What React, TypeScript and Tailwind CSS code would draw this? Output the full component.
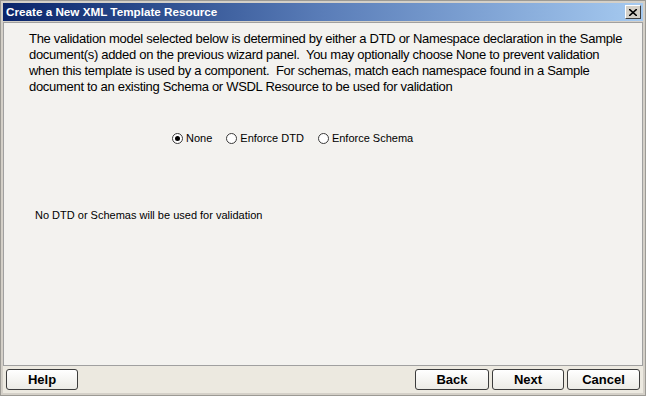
import React, { useState } from 'react';

function Radio({ checked, label, onClick }: { checked: boolean; label: string; onClick: () => void }) {
  return (
    <label className="flex items-center gap-[3px] cursor-pointer" onClick={onClick}>
      <span className="w-[11px] h-[11px] rounded-full border border-[#3a3a3a] bg-white flex items-center justify-center">
        {checked && <span className="w-[5px] h-[5px] rounded-full bg-black"></span>}
      </span>
      <span>{label}</span>
    </label>
  );
}

function WizButton({ label, w }: { label: string; w: string }) {
  return (
    <button
      className={`${w} h-[21px] rounded-[3px] border border-[#3c3c3c] bg-gradient-to-b from-white to-[#ecebe6] text-[13px] font-bold text-black`}
      style={{ fontFamily: '"Liberation Sans", Arial, sans-serif' }}>
      {label}
    </button>
  );
}

export default function App() {
  const [mode, setMode] = useState('none');

  return (
    <div className="w-[646px] h-[396px] bg-[#d4d0c8] p-[2px] flex flex-col border border-[#9c9a94]">
      {/* title bar */}
      <div className="h-[18px] flex items-center justify-between pl-[3px] pr-[2px] bg-gradient-to-r from-[#0a246a] via-[#5a7db8] to-[#a6caf0]">
        <span
          className="text-white font-bold text-[11.7px]"
          style={{ fontFamily: '"Liberation Sans", Arial, sans-serif' }}>
          Create a New XML Template Resource
        </span>
        <span className="w-[16px] h-[14px] bg-[#d4d0c8] border border-t-white border-l-white border-r-[#404040] border-b-[#404040] flex items-center justify-center">
          <svg width="8" height="7" viewBox="0 0 8 7">
            <path d="M0 0 L8 7 M8 0 L0 7" stroke="black" strokeWidth="1.6" />
          </svg>
        </span>
      </div>

      {/* content panel */}
      <div className="flex-1 bg-[#f3f2ef] border border-[#a0a0a0] mt-[1px] flex flex-col">
        <div
          className="pl-[25px] pt-[8px] text-[13px] tracking-[-0.3px] leading-[16px] text-black whitespace-nowrap"
          style={{ fontFamily: '"Liberation Sans", Arial, sans-serif' }}>
          The validation model selected below is determined by either a DTD or Namespace declaration in the Sample
          <br />
          document(s) added on the previous wizard panel.&nbsp; You may optionally choose None to prevent validation
          <br />
          when this template is used by a component.&nbsp; For schemas, match each namespace found in a Sample
          <br />
          document to an existing Schema or WSDL Resource to be used for validation
        </div>

        <div
          className="mt-[35px] ml-[168px] flex items-center gap-[14px] text-[11px] text-black"
          style={{ fontFamily: '"Liberation Sans", Arial, sans-serif' }}>
          <Radio checked={mode === 'none'} label="None" onClick={() => setMode('none')} />
          <Radio checked={mode === 'dtd'} label="Enforce DTD" onClick={() => setMode('dtd')} />
          <Radio checked={mode === 'schema'} label="Enforce Schema" onClick={() => setMode('schema')} />
        </div>

        <div
          className="mt-[60px] ml-[31px] text-[11px] text-black"
          style={{ fontFamily: '"Liberation Sans", Arial, sans-serif' }}>
          No DTD or Schemas will be used for validation
        </div>
      </div>

      {/* button bar */}
      <div className="h-[27px] bg-[#ece9e0] flex items-center justify-between px-[3px]">
        <WizButton label="Help" w="w-[72px]" />
        <div className="flex gap-[3px]">
          <WizButton label="Back" w="w-[74px]" />
          <WizButton label="Next" w="w-[72px]" />
          <WizButton label="Cancel" w="w-[73px]" />
        </div>
      </div>
    </div>
  );
}
